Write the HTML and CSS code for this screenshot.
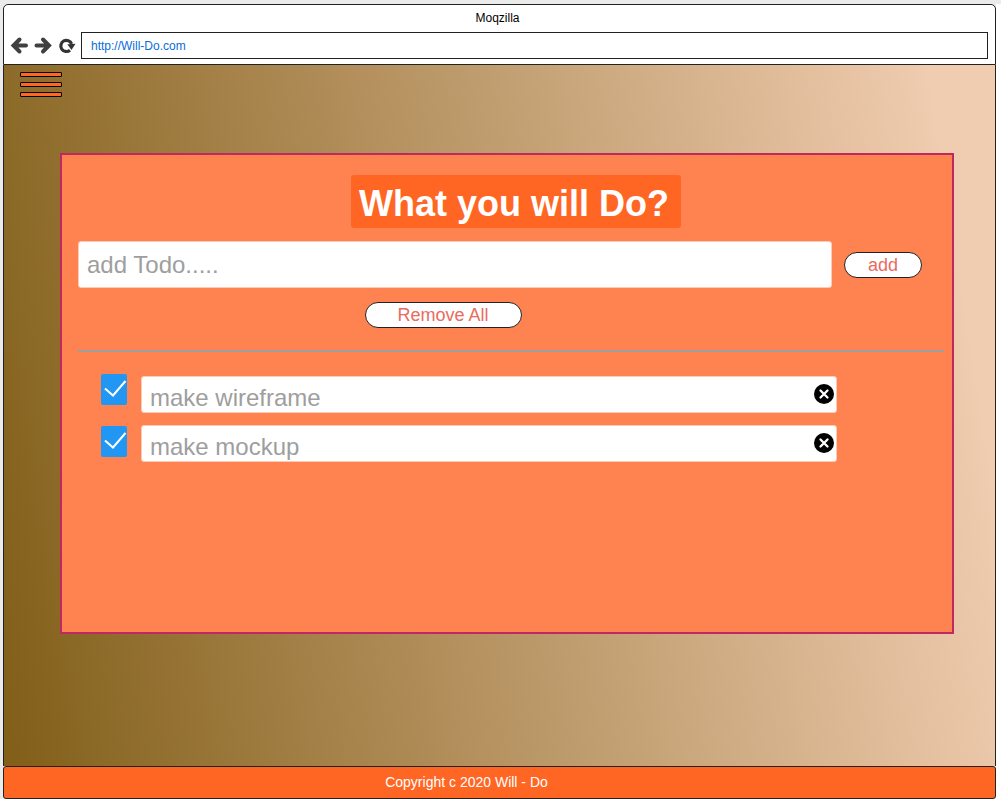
FILE: index.html
```html
<!DOCTYPE html>
<html lang="en">
<head>
<meta charset="utf-8">
<title>Will-Do</title>
<link rel="stylesheet" href="styles.css">
</head>
<body>
<div class="window">
  <header class="chrome">
    <div class="window-title">Moqzilla</div>
    <div class="toolbar">
      <nav class="nav" aria-label="Browser">
        <button class="nav-button" type="button" aria-label="Back">
          <svg width="16" height="18" viewBox="0 0 16 18"><path d="M8.500 2.500 2.500 8.500 8.500 14.500M3 8.500H15" fill="none" stroke="#404040" stroke-width="4" stroke-linecap="round"/></svg>
        </button>
        <button class="nav-button" type="button" aria-label="Forward">
          <svg width="16" height="18" viewBox="0 0 16 18"><path d="M8 2.500 14 8.500 8 14.500M1.500 8.500H13.500" fill="none" stroke="#404040" stroke-width="4" stroke-linecap="round"/></svg>
        </button>
        <button class="nav-button" type="button" aria-label="Reload">
          <svg width="16" height="18" viewBox="0 0 16 18"><path d="M11 13.200A5.600 5.600 0 1 1 12.600 6.800" fill="none" stroke="#333" stroke-width="3.200"/><path d="M8.300 7.300 16.500 6.800 12.500 13Z" fill="#333"/></svg>
        </button>
      </nav>
      <input class="address" type="text" value="http://Will-Do.com" aria-label="Address">
    </div>
  </header>
  <main class="page">
    <button class="menu" type="button" aria-label="Menu">
      <span class="menu-bar"></span>
      <span class="menu-bar"></span>
      <span class="menu-bar"></span>
    </button>
    <section class="card">
      <h1 class="title">What you will Do?</h1>
      <form class="add-form">
        <input class="todo-input" type="text" placeholder="add Todo....." aria-label="New todo">
        <button class="pill" type="button">add</button>
      </form>
      <button class="pill pill-wide" type="button">Remove All</button>
      <hr class="divider">
      <div class="todos">
        <div class="checks">
          <input class="check" type="checkbox" id="todo-1" checked>
          <input class="check" type="checkbox" id="todo-2" checked>
        </div>
        <div class="items">
          <div class="item">
            <label class="item-text" for="todo-1">make wireframe</label>
            <button class="remove" type="button" aria-label="Remove make wireframe">
              <svg width="20" height="20" viewBox="0 0 20 20"><circle cx="10" cy="10" r="10" fill="#000"/><path d="M6.500 6.500 13.500 13.500M13.500 6.500 6.500 13.500" stroke="#fff" stroke-width="2.300" stroke-linecap="round"/></svg>
            </button>
          </div>
          <div class="item">
            <label class="item-text" for="todo-2">make mockup</label>
            <button class="remove" type="button" aria-label="Remove make mockup">
              <svg width="20" height="20" viewBox="0 0 20 20"><circle cx="10" cy="10" r="10" fill="#000"/><path d="M6.500 6.500 13.500 13.500M13.500 6.500 6.500 13.500" stroke="#fff" stroke-width="2.300" stroke-linecap="round"/></svg>
            </button>
          </div>
        </div>
      </div>
    </section>
  </main>
  <footer class="footer">Copyright c 2020 Will - Do</footer>
</div>
</body>
</html>
```

FILE: styles.css
```css
* {
  box-sizing: border-box;
}

body {
  margin: 0;
  min-height: 100vh;
  padding: 0 5px 5px 0;
  display: flex;
  background: linear-gradient(#ebebeb 4px, #fff 4px);
  font-family: "Liberation Sans", Arial, sans-serif;
}

button {
  padding: 0;
  border: 0;
  background: none;
  font-family: inherit;
}

svg {
  display: block;
}

.window {
  flex: 1;
  display: flex;
  flex-direction: column;
  border: solid #ebebeb;
  border-width: 4px 0 0 3px;
  background: #ebebeb;
}

.chrome {
  padding: 5px 7px 5px;
  border: 1px solid #222;
  border-radius: 5px 5px 0 0;
  background: #fff;
}

.window-title {
  padding-right: 4px;
  margin-bottom: 5px;
  font-size: 12px;
  line-height: 17px;
  text-align: center;
}

.toolbar {
  display: flex;
  align-items: center;
  gap: 6px;
}

.nav {
  display: flex;
  gap: 8px;
}

.nav-button {
  width: 16px;
  height: 18px;
}

.nav-button svg {
  overflow: visible;
}

.address {
  flex: 1;
  min-width: 0;
  height: 27px;
  padding: 0 9px;
  border: 1px solid #222;
  border-radius: 0;
  color: #0a6cdc;
  font: 12px "Liberation Sans", Arial, sans-serif;
}

.page {
  flex: 1;
  padding: 7px 41px 0 56px;
  border: solid #222;
  border-width: 0 1px;
  background: linear-gradient(81deg, #82601a 1%, #f0ccb0 94%);
}

.menu {
  display: flex;
  flex-direction: column;
  gap: 5px;
  margin: 0 0 56px -40px;
}

.menu-bar {
  width: 42px;
  height: 5px;
  border: 1px solid #000;
  border-radius: 1px;
  background: #ff6624;
}

.card {
  display: flex;
  flex-direction: column;
  min-height: 481px;
  padding: 20px 8px 20px 16px;
  border: 2px solid #bd2a60;
  background: #ff8350;
}

.title {
  align-self: center;
  margin: 0 0 13px 10px;
  padding: 8px 12px 3px 8px;
  border-radius: 3px;
  background: #ff6624;
  color: #fff;
  font-size: 36px;
  line-height: 42px;
}

.add-form {
  display: flex;
  align-items: center;
  gap: 12px;
  margin: 0 22px 14px 0;
}

.todo-input {
  flex: 1;
  min-width: 0;
  height: 47px;
  padding: 0 8px;
  border: 1px solid #ffcbb6;
  border-radius: 3px;
  background: #fff;
  font: 24px "Liberation Sans", Arial, sans-serif;
}

.todo-input::placeholder {
  color: #9e9e9e;
}

.pill {
  width: 78px;
  height: 26px;
  border: 1px solid #222;
  border-radius: 13px;
  background: #fff;
  color: #ea6b60;
  font-size: 18px;
  line-height: 24px;
}

.pill-wide {
  align-self: center;
  width: 157px;
  margin-right: 136px;
}

.divider {
  width: 100%;
  height: 2px;
  margin: 22px 0;
  border: 0;
  background: #9e9e9e;
}

.todos {
  display: flex;
  gap: 14px;
  margin: 0 107px 0 23px;
}

.checks {
  display: flex;
  flex-direction: column;
  gap: 21px;
}

.check {
  appearance: none;
  width: 26px;
  height: 31px;
  margin: 0;
  border-radius: 2px;
  background: #2196f3;
}

.check:checked {
  background: #2196f3 url("data:image/svg+xml,%3Csvg xmlns='http://www.w3.org/2000/svg' viewBox='0 0 26 31'%3E%3Cpath d='M4 14.500 12 21.500 24.500 7' fill='none' stroke='white' stroke-width='2'/%3E%3C/svg%3E") center no-repeat;
}

.items {
  flex: 1;
  display: flex;
  flex-direction: column;
  gap: 12px;
  padding-top: 2px;
}

.item {
  display: flex;
  justify-content: space-between;
  height: 37px;
  padding: 7px 2px 0 8px;
  border: 1px solid #ffcbb6;
  border-radius: 3px;
  background: #fff;
}

.item-text {
  color: #9e9e9e;
  font-size: 24px;
  line-height: 28px;
}

.remove {
  width: 20px;
  height: 20px;
}

.footer {
  padding: 6px 66px 7px 0;
  border: 1px solid #222;
  border-radius: 3px;
  background: #ff6624;
  color: #fff;
  font-size: 14px;
  line-height: 18px;
  text-align: center;
}
```
